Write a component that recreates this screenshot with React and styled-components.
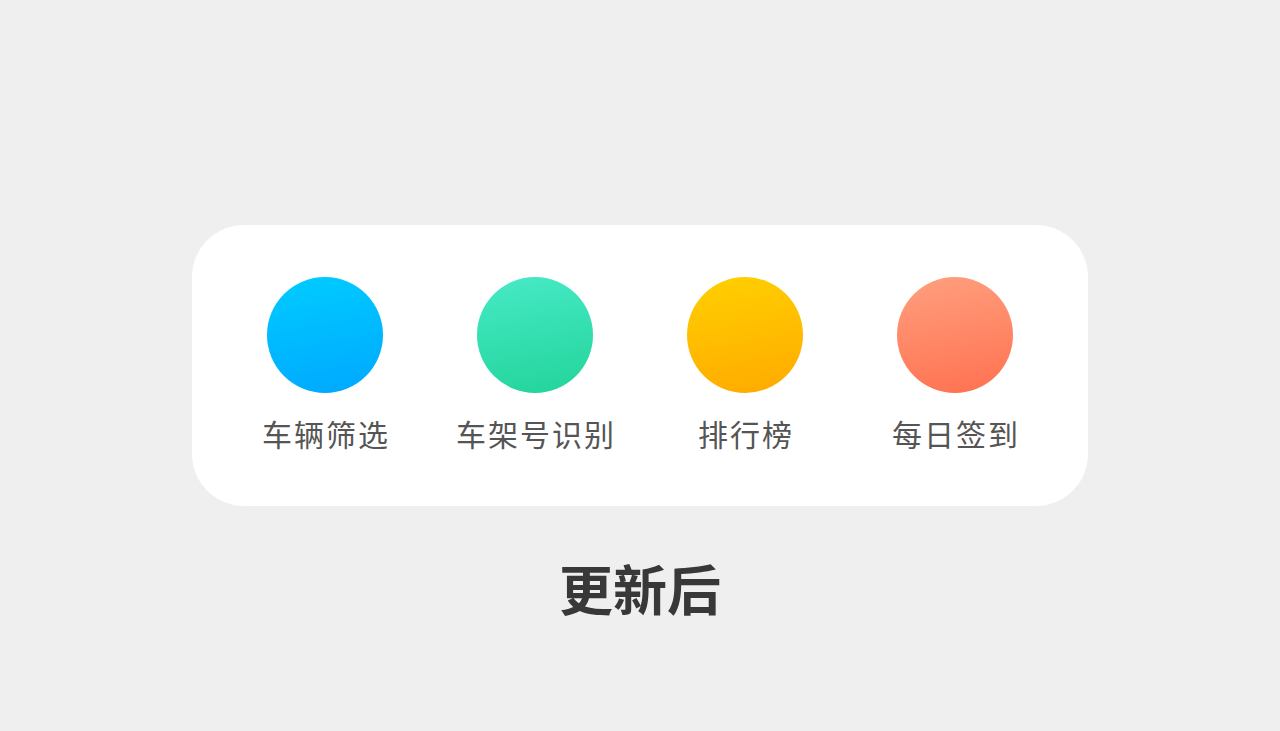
import React from "react";
import styled, { createGlobalStyle } from "styled-components";

const Global = createGlobalStyle`
  html, body { margin: 0; padding: 0; background: #efefef; }
  body { font-family: "Noto Sans CJK SC", "Noto Sans", sans-serif; }
`;

const Page = styled.div`
  width: 1280px;
  height: 731px;
  display: flex;
  flex-direction: column;
  align-items: center;
  padding-top: 225px;
  box-sizing: border-box;
`;

const Card = styled.div`
  width: 896px;
  height: 281px;
  box-sizing: border-box;
  background: #ffffff;
  border-radius: 52px;
  padding: 52px 28px 0;
  display: grid;
  grid-template-columns: repeat(4, 210px);
  align-items: start;
`;

const Item = styled.div`
  display: flex;
  flex-direction: column;
  align-items: center;
`;

const Circle = styled.div`
  width: 116px;
  height: 116px;
  border-radius: 50%;
  background: linear-gradient(170deg, ${(p) => p.$from}, ${(p) => p.$to});
`;

const Label = styled.div`
  margin-top: 20px;
  font-size: 30px;
  line-height: 40px;
  letter-spacing: 2px;
  text-indent: 2px;
  color: #555555;
  white-space: nowrap;
`;

const Title = styled.div`
  margin-top: 47px;
  font-size: 54px;
  line-height: 70px;
  font-weight: 700;
  color: #383838;
  letter-spacing: 0px;
`;

const items = [
  { label: "车辆筛选", from: "#00ccff", to: "#00a8ff" },
  { label: "车架号识别", from: "#47eac6", to: "#22d49a" },
  { label: "排行榜", from: "#ffd000", to: "#ffaa00" },
  { label: "每日签到", from: "#ff9f7e", to: "#ff7150" },
];

export default function App() {
  return (
    <>
      <Global />
      <Page>
        <Card>
          {items.map((it) => (
            <Item key={it.label}>
              <Circle $from={it.from} $to={it.to} />
              <Label>{it.label}</Label>
            </Item>
          ))}
        </Card>
        <Title>更新后</Title>
      </Page>
    </>
  );
}
